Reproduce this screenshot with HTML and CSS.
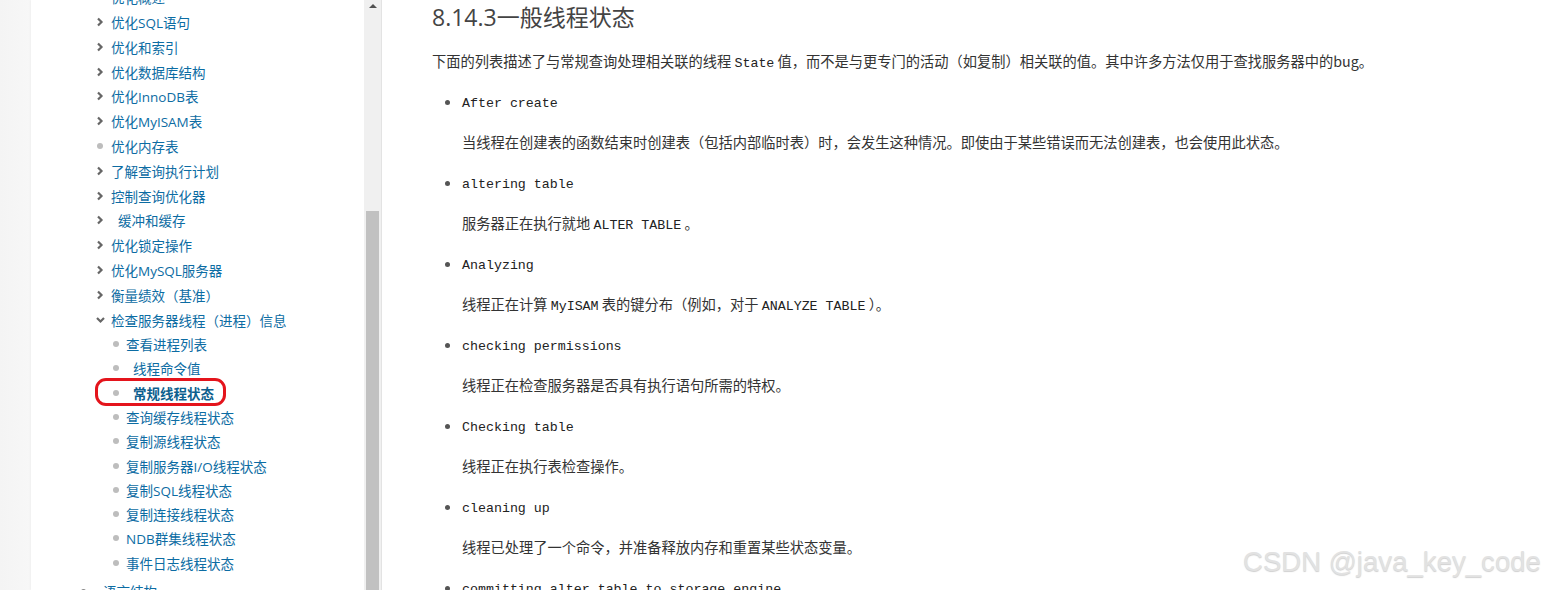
FILE: index.html
```html
<!DOCTYPE html>
<html lang="zh-CN">
<head>
<meta charset="utf-8">
<title>8.14.3 一般线程状态</title>
<link rel="stylesheet" href="styles.css">
</head>
<body>
<div class="page">
  <div class="gutter"></div>
  <nav class="sidebar">
    <ul class="toc">
      <li class="row l1"><span class="mk"><i class="dot"></i></span><a>优化概述</a></li>
      <li class="row l1"><span class="mk"><svg class="chev" width="8" height="10" viewBox="0 0 8 10"><path d="M2 1.5 L5.5 5 L2 8.5" /></svg></span><a>优化SQL语句</a></li>
      <li class="row l1"><span class="mk"><svg class="chev" width="8" height="10" viewBox="0 0 8 10"><path d="M2 1.5 L5.5 5 L2 8.5" /></svg></span><a>优化和索引</a></li>
      <li class="row l1"><span class="mk"><svg class="chev" width="8" height="10" viewBox="0 0 8 10"><path d="M2 1.5 L5.5 5 L2 8.5" /></svg></span><a>优化数据库结构</a></li>
      <li class="row l1"><span class="mk"><svg class="chev" width="8" height="10" viewBox="0 0 8 10"><path d="M2 1.5 L5.5 5 L2 8.5" /></svg></span><a>优化InnoDB表</a></li>
      <li class="row l1"><span class="mk"><svg class="chev" width="8" height="10" viewBox="0 0 8 10"><path d="M2 1.5 L5.5 5 L2 8.5" /></svg></span><a>优化MyISAM表</a></li>
      <li class="row l1"><span class="mk"><i class="dot"></i></span><a>优化内存表</a></li>
      <li class="row l1"><span class="mk"><svg class="chev" width="8" height="10" viewBox="0 0 8 10"><path d="M2 1.5 L5.5 5 L2 8.5" /></svg></span><a>了解查询执行计划</a></li>
      <li class="row l1"><span class="mk"><svg class="chev" width="8" height="10" viewBox="0 0 8 10"><path d="M2 1.5 L5.5 5 L2 8.5" /></svg></span><a>控制查询优化器</a></li>
      <li class="row l1"><span class="mk"><svg class="chev" width="8" height="10" viewBox="0 0 8 10"><path d="M2 1.5 L5.5 5 L2 8.5" /></svg></span><a class="sp">缓冲和缓存</a></li>
      <li class="row l1"><span class="mk"><svg class="chev" width="8" height="10" viewBox="0 0 8 10"><path d="M2 1.5 L5.5 5 L2 8.5" /></svg></span><a>优化锁定操作</a></li>
      <li class="row l1"><span class="mk"><svg class="chev" width="8" height="10" viewBox="0 0 8 10"><path d="M2 1.5 L5.5 5 L2 8.5" /></svg></span><a>优化MySQL服务器</a></li>
      <li class="row l1"><span class="mk"><svg class="chev" width="8" height="10" viewBox="0 0 8 10"><path d="M2 1.5 L5.5 5 L2 8.5" /></svg></span><a>衡量绩效（基准）</a></li>
      <li class="row l1"><span class="mk"><svg class="chev down" width="9" height="8" viewBox="0 0 9 8"><path d="M1 2 L4.5 5.5 L8 2" /></svg></span><a>检查服务器线程（进程）信息</a></li>
      <li class="row l2"><span class="mk"><i class="dot"></i></span><a>查看进程列表</a></li>
      <li class="row l2"><span class="mk"><i class="dot"></i></span><a class="sp">线程命令值</a></li>
      <li class="row l2 current"><span class="mk"><i class="dot"></i></span><a class="sp">常规线程状态</a><span class="mark-oval"></span></li>
      <li class="row l2"><span class="mk"><i class="dot"></i></span><a>查询缓存线程状态</a></li>
      <li class="row l2"><span class="mk"><i class="dot"></i></span><a>复制源线程状态</a></li>
      <li class="row l2"><span class="mk"><i class="dot"></i></span><a>复制服务器I/O线程状态</a></li>
      <li class="row l2"><span class="mk"><i class="dot"></i></span><a>复制SQL线程状态</a></li>
      <li class="row l2"><span class="mk"><i class="dot"></i></span><a>复制连接线程状态</a></li>
      <li class="row l2"><span class="mk"><i class="dot"></i></span><a>NDB群集线程状态</a></li>
      <li class="row l2"><span class="mk"><i class="dot"></i></span><a>事件日志线程状态</a></li>
      <li class="row l0"><span class="mk"><i class="dot dark"></i></span><a>语言结构</a></li>
    </ul>
  </nav>
  <div class="scrollbar">
    <div class="arrow-up"></div>
    <div class="thumb"></div>
  </div>
  <main class="content">
    <h1 class="title">8.14.3一般线程状态</h1>
    <p class="intro">下面的列表描述了与常规查询处理相关联的线程 <code>State</code> 值，而不是与更专门的活动（如复制）相关联的值。其中许多方法仅用于查找服务器中的bug。</p>
    <ul class="states">
      <li>
        <div class="term"><code>After create</code></div>
        <p class="desc">当线程在创建表的函数结束时创建表（包括内部临时表）时，会发生这种情况。即使由于某些错误而无法创建表，也会使用此状态。</p>
      </li>
      <li>
        <div class="term"><code>altering table</code></div>
        <p class="desc">服务器正在执行就地 <code>ALTER TABLE</code> 。</p>
      </li>
      <li>
        <div class="term"><code>Analyzing</code></div>
        <p class="desc">线程正在计算 <code>MyISAM</code> 表的键分布（例如，对于 <code>ANALYZE TABLE</code> ）。</p>
      </li>
      <li>
        <div class="term"><code>checking permissions</code></div>
        <p class="desc">线程正在检查服务器是否具有执行语句所需的特权。</p>
      </li>
      <li>
        <div class="term"><code>Checking table</code></div>
        <p class="desc">线程正在执行表检查操作。</p>
      </li>
      <li>
        <div class="term"><code>cleaning up</code></div>
        <p class="desc">线程已处理了一个命令，并准备释放内存和重置某些状态变量。</p>
      </li>
      <li>
        <div class="term"><code>committing alter table to storage engine</code></div>
      </li>
    </ul>
  </main>
  <div class="watermark">CSDN @java_key_code</div>
</div>
</body>
</html>
```

FILE: styles.css
```css
html, body {
  margin: 0;
  padding: 0;
}

body {
  background: #f5f5f5;
  font-family: "Open Sans", "Noto Sans CJK SC", sans-serif;
  overflow: hidden;
}

.page {
  position: relative;
  display: flex;
  height: 590px;
  overflow: hidden;
}

.gutter {
  width: 31px;
  flex: 0 0 31px;
  background: linear-gradient(to right, #f4f4f4, #f7f7f7);
}

.sidebar {
  width: 333px;
  flex: 0 0 333px;
  background: #ffffff;
  box-shadow: -1px 0 2px rgba(0, 0, 0, 0.03);
}

.toc {
  list-style: none;
  margin: -15.2px 0 0 0;
  padding: 0;
}

.row {
  display: flex;
  align-items: center;
  height: 24.8px;
  font-size: 13.5px;
  white-space: nowrap;
}

.row a {
  color: #0c6ca3;
  text-decoration: none;
}

.row a.sp {
  padding-left: 7px;
}

.mk {
  display: flex;
  align-items: center;
}

.l1 { padding-left: 65px; }
.l1 .mk { width: 15px; }

.l2 {
  padding-left: 82px;
  height: 24.3px;
}
.l2 .mk { width: 13px; }

.l0 {
  padding-left: 50px;
  margin-top: 4px;
}
.l0 .mk { width: 22px; }

.chev {
  display: block;
  fill: none;
  stroke: #666666;
  stroke-width: 2.2;
}

.dot {
  display: block;
  width: 6px;
  height: 6px;
  border-radius: 50%;
  background: #bdbdbd;
}

.l1 .dot { margin-left: 1px; }
.dot.dark { background: #8a8a8a; width: 5px; height: 5px; }

.current {
  position: relative;
}

.current a {
  font-weight: 700;
  color: #0d5f8e;
}

.mark-oval {
  position: absolute;
  left: 64px;
  top: -3px;
  width: 131px;
  height: 28px;
  box-sizing: border-box;
  border: 3px solid #e4141c;
  border-radius: 11px;
}

.scrollbar {
  width: 17px;
  flex: 0 0 17px;
  background: #f0f0f0;
  border-right: 1px solid #e3e3e3;
  display: flex;
  flex-direction: column;
  align-items: center;
}

.arrow-up {
  margin-top: 4px;
  width: 0;
  height: 0;
  border-left: 4px solid transparent;
  border-right: 4px solid transparent;
  border-bottom: 4px solid #505050;
}

.thumb {
  margin-top: 203px;
  width: 13px;
  flex: 1;
  background: #c1c1c1;
}

.content {
  flex: 1;
  background: #ffffff;
  padding: 2px 0 0 50px;
  color: #333333;
  font-family: "Noto Sans CJK SC", "Open Sans", sans-serif;
  font-size: 14.25px;
}

.title {
  margin: 0;
  font-family: "Open Sans", "Noto Sans CJK SC", sans-serif;
  font-size: 23px;
  line-height: 30px;
  font-weight: 400;
  color: #444444;
}

.intro {
  margin: 17.5px 0 0 0;
  line-height: 21px;
  height: 21px;
}

code {
  font-family: "Liberation Mono", "Courier New", monospace;
  font-size: 13.3px;
  line-height: 1;
  color: #222222;
}

.states {
  margin: 19px 0 0 0;
  padding: 0 0 0 30px;
  list-style: disc;
}

.states li {
  margin: 0 0 19px 0;
  line-height: 21px;
}

.states li::marker {
  color: #555555;
  font-size: 14px;
}

.term {
  line-height: 21px;
  height: 21px;
}

.desc {
  margin: 20px 0 0 0;
  line-height: 21px;
  height: 21px;
}

.watermark {
  position: absolute;
  left: 1243px;
  top: 546px;
  font-family: "Liberation Sans", Arial, sans-serif;
  font-size: 27.6px;
  line-height: 32px;
  color: #e2e2e2;
  text-shadow: 0 1px 1px rgba(150, 150, 150, 0.45);
  white-space: nowrap;
}
```
